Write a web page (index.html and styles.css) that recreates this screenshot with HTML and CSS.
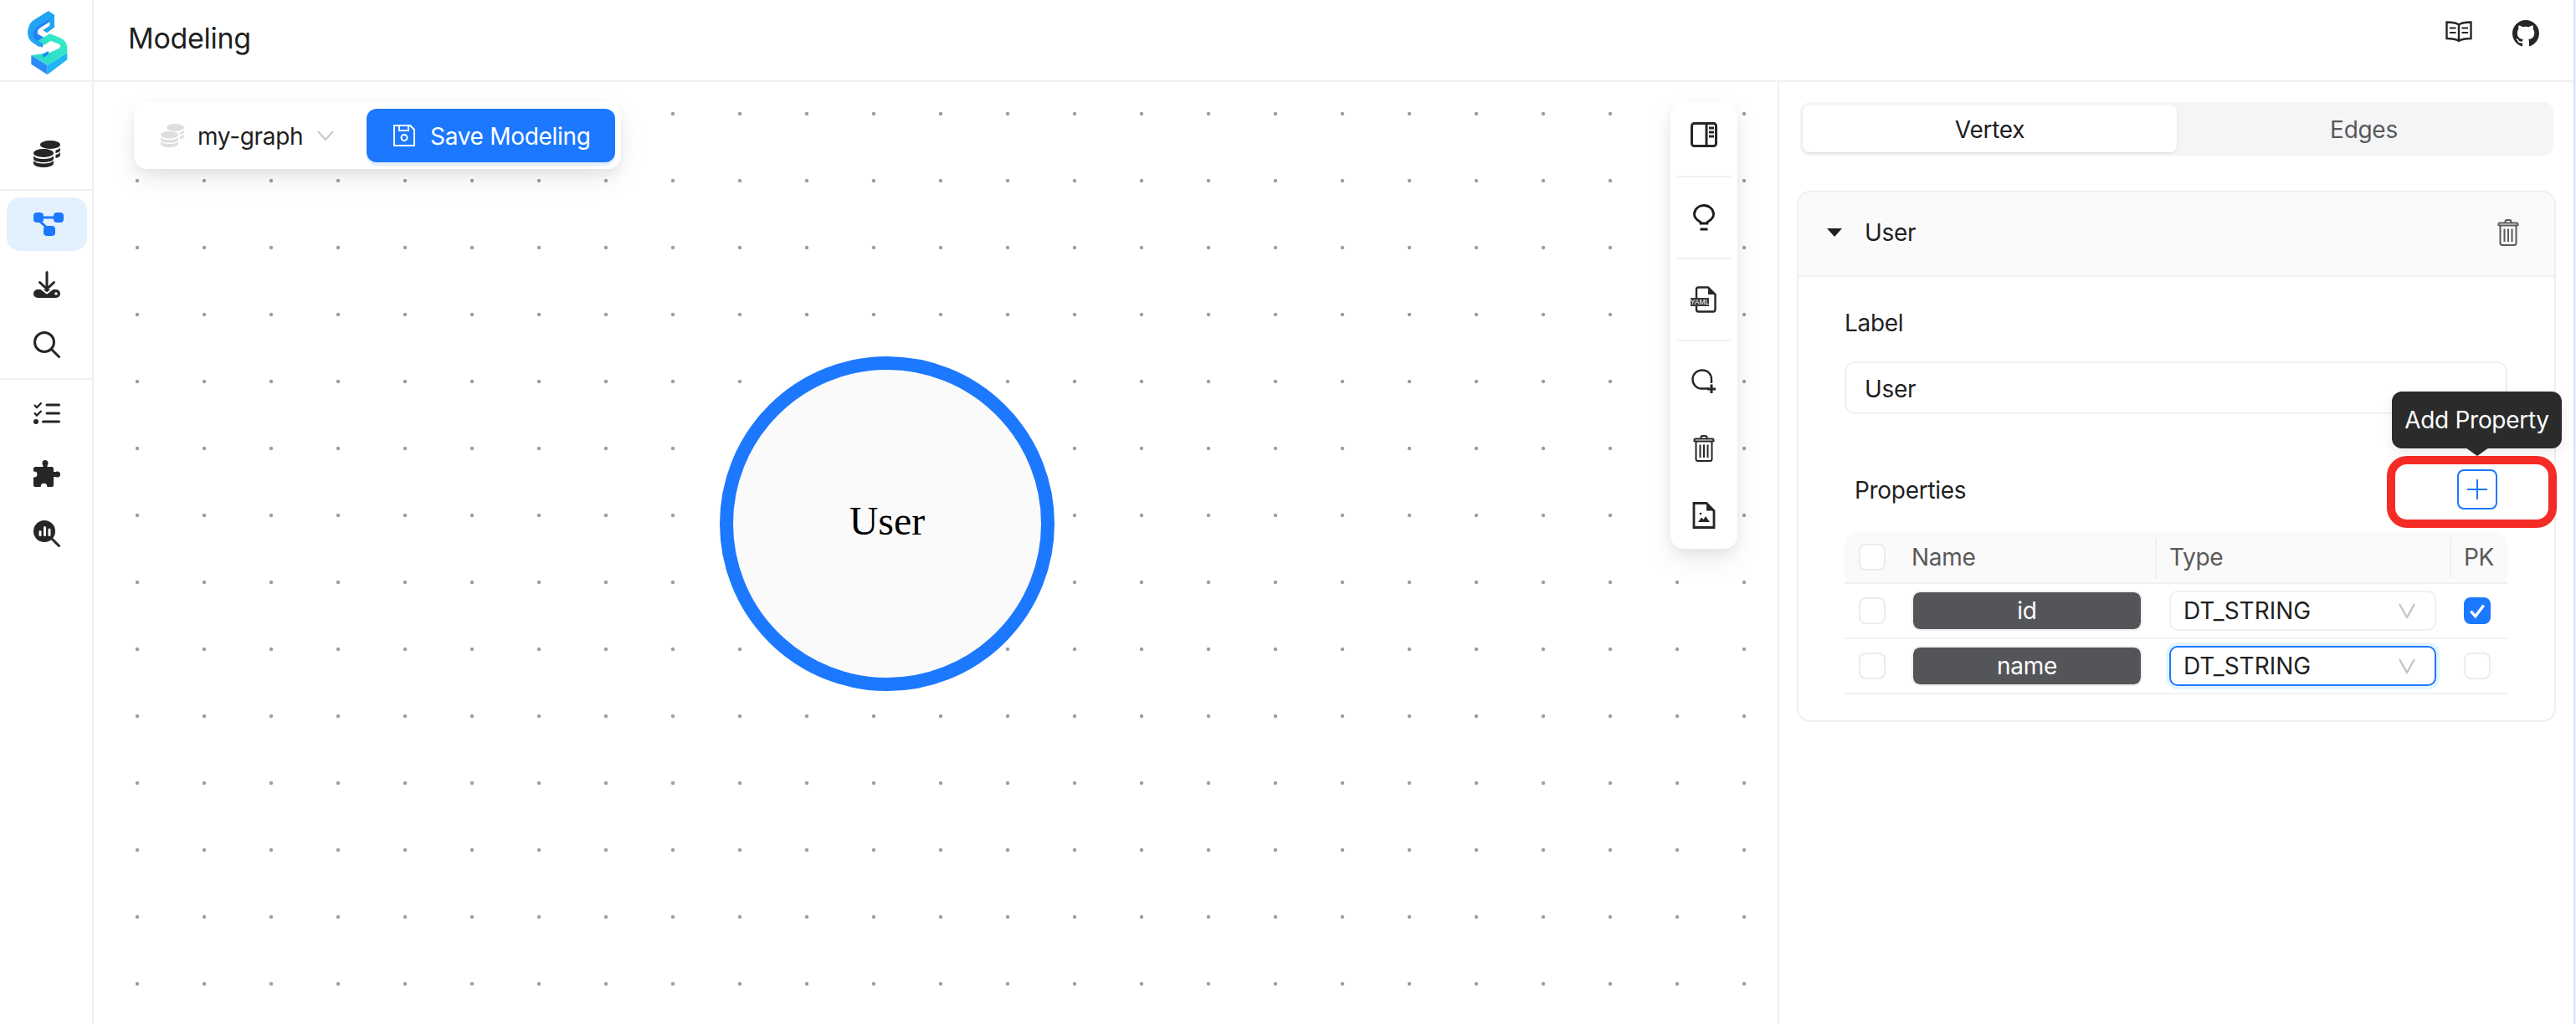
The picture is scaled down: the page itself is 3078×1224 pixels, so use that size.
FILE: index.html
```html
<!DOCTYPE html>
<html lang="en">
<head>
<meta charset="utf-8">
<title>Modeling</title>
<link rel="stylesheet" href="styles.css">
</head>
<body>
<svg class="defs" width="0" height="0" aria-hidden="true">
  <symbol id="coins" viewBox="0 0 32 32">
    <ellipse cx="20" cy="5" rx="12" ry="5"/>
    <path d="M26.500 11.500C29 11 31 10 32 8.500V11.500C32 13 29.500 14.500 26.500 15Z"/>
    <path d="M26.500 17C29 16.500 31 15.500 32 14V17C32 19 29.500 20.500 26.500 21Z"/>
    <ellipse cx="12" cy="15" rx="12" ry="5"/>
    <path d="M0 18.500C2 21 7 22 12 22S22 21 24 18.500V21.500C24 24.500 18 26 12 26S0 24.500 0 21.500Z"/>
    <path d="M0 24C2 26.500 7 27.500 12 27.500S22 26.500 24 24V27C24 30.500 18 32 12 32S0 30.500 0 27Z"/>
  </symbol>
  <symbol id="trash" viewBox="0 0 32 32">
    <g fill="none" stroke="currentColor" stroke-width="2">
      <path d="M5 7.500H27M6.500 7.500V28.500C6.500 30 7.500 31 9 31H23C24.500 31 25.500 30 25.500 28.500V7.500"/>
      <path d="M4.500 8V6C4.500 5 5 4.500 6 4.500H26C27 4.500 27.500 5 27.500 6V8" />
      <path d="M12.500 4.500V3C12.500 1.800 13.500 1 14.500 1H17.500C18.500 1 19.500 1.800 19.500 3V4.500"/>
      <path d="M11.500 11.500V27M16 11.500V27M20.500 11.500V27"/>
    </g>
  </symbol>
  <symbol id="chev" viewBox="0 0 20 12">
    <path d="M1 1L10 11L19 1" fill="none" stroke="currentColor" stroke-width="2"/>
  </symbol>
</svg>

<div class="app">
  <aside class="sidebar">
    <div class="logo">
      <svg class="logo-mark" viewBox="0 0 210 255">
        <defs>
          <linearGradient id="tealg" x1="0" y1="1" x2="1" y2="0">
            <stop offset="0" stop-color="#2cd4cf"/><stop offset="1" stop-color="#35eec4"/>
          </linearGradient>
        </defs>
        <path fill="#2484f7" d="M113 22L58 56Q38 72 40 104Q42 124 60 136L92 152L100 118L76 104Q70 92 84 82L135 50Z"/>
        <path fill="#1fa5f4" d="M114 22L135 35V80L108 100L94 90L118 74V50L78 74Q58 88 58 106Q60 122 76 130L96 142L80 150L62 138Q42 124 40 104Q40 72 60 56Z"/>
        <path fill="#2a8bf8" d="M52 180L110 216V250L52 212Z"/>
        <path fill="#1fb4f3" d="M110 216L181 171V196L110 250Z"/>
        <path fill="url(#tealg)" d="M52 180L110 216L181 171V150Q180 128 150 115L118 103L76 128L100 143L122 128L152 140Q162 148 150 156L116 172Z"/>
        <path fill="#1c8df4" d="M90 178L114 164V176L96 188Z"/>
      </svg>
    </div>
    <nav class="nav">
      <a class="nav-item nav-first"><svg class="ico" fill="currentColor"><use href="#coins"/></svg></a>
      <div class="nav-line"></div>
      <a class="nav-item is-active">
        <svg class="ico-graph" viewBox="0 0 40 32" fill="currentColor">
          <rect x="4" y="2" width="12" height="12" rx="4"/>
          <rect x="28" y="2" width="12" height="12" rx="4"/>
          <rect x="16" y="18" width="14" height="12" rx="4"/>
          <path d="M14 8H30M11 12L21 21" stroke="currentColor" stroke-width="3" fill="none"/>
        </svg>
      </a>
      <a class="nav-item">
        <svg class="ico" viewBox="0 0 32 32" fill="currentColor">
          <rect x="0" y="22" width="32" height="10" rx="5"/>
          <path d="M8 20.500L16 26.500L24 20.500" fill="none" stroke="#fff" stroke-width="2"/>
          <path d="M16 1.500V21M7.500 13.500L16 21.500L24.500 13.500" fill="none" stroke="currentColor" stroke-width="3" stroke-linecap="round"/>
          <circle cx="27" cy="27" r="1.800" fill="#fff"/>
        </svg>
      </a>
      <a class="nav-item">
        <svg class="ico" viewBox="0 0 32 32" fill="none" stroke="currentColor" stroke-width="3" stroke-linecap="round">
          <circle cx="13" cy="13" r="11.500"/><path d="M21.500 21.500L30.500 30.500"/>
        </svg>
      </a>
      <div class="nav-line"></div>
      <a class="nav-item">
        <svg class="ico" viewBox="0 0 32 32" fill="none" stroke="currentColor" stroke-width="3" stroke-linecap="round">
          <path d="M16 6H30.500M16 16H30.500M11.500 26H30.500"/>
          <path d="M1 6L4 9L9.500 3.500M1 15.500L4 18.500L9.500 13" stroke-width="2.400" stroke-linecap="butt"/>
          <circle cx="3" cy="26" r="3" fill="currentColor" stroke="none"/>
        </svg>
      </a>
      <a class="nav-item">
        <svg class="ico" viewBox="0 0 32 32" fill="currentColor">
          <path d="M2 8H11.500V5.500H16.500V8H22C23 8 24 9 24 10V14H26V20H24V30C24 31 23 32 22 32H2C1 32 0 31 0 30V10C0 9 1 8 2 8Z"/>
          <circle cx="14" cy="3.500" r="3.500"/><circle cx="28.500" cy="17" r="3.500"/>
          <circle cx="1" cy="17" r="3.400" fill="#fff"/><circle cx="12.500" cy="31.500" r="3.800" fill="#fff"/>
        </svg>
      </a>
      <a class="nav-item">
        <svg class="ico" viewBox="0 0 32 32" fill="currentColor">
          <circle cx="13" cy="13" r="13"/>
          <path d="M22 22L30.500 30.500" stroke="currentColor" stroke-width="3" stroke-linecap="round"/>
          <rect x="6.500" y="12" width="3" height="7" rx="1.500" fill="#fff"/>
          <rect x="12" y="7" width="3" height="12" rx="1.500" fill="#fff"/>
          <rect x="17.500" y="9.500" width="3" height="9.500" rx="1.500" fill="#fff"/>
        </svg>
      </a>
    </nav>
  </aside>

  <div class="main">
    <header class="topbar">
      <h1 class="title">Modeling</h1>
      <div class="top-icons">
        <svg class="ico" viewBox="0 0 32 32" fill="none" stroke="#262626" stroke-width="2.400">
          <path d="M16 5.500C13 3.500 9 2.500 1.500 2.500V22C9 22 13 23 16 25C19 23 23 22 30.500 22V2.500C23 2.500 19 3.500 16 5.500ZM16 5.500V25"/>
          <path d="M5 9.500H12.500M5 15H12.500M19.500 9.500H27M19.500 15H27" stroke-width="2.200"/>
        </svg>
        <svg class="ico" viewBox="0 0 16 16" fill="#262626"><path d="M8 0C3.580 0 0 3.580 0 8c0 3.540 2.290 6.530 5.470 7.590.4.070.55-.17.55-.38 0-.19-.01-.82-.01-1.490-2.010.37-2.530-.49-2.690-.94-.09-.23-.48-.94-.82-1.130-.28-.15-.68-.52-.01-.53.63-.01 1.080.58 1.230.82.72 1.210 1.870.87 2.330.66.070-.52.28-.87.51-1.070-1.780-.2-3.640-.89-3.640-3.950 0-.87.31-1.590.82-2.150-.08-.2-.36-1.020.08-2.120 0 0 .67-.21 2.200.82.64-.18 1.320-.27 2-.27.68 0 1.360.09 2 .27 1.530-1.040 2.200-.82 2.200-.82.44 1.100.16 1.920.08 2.120.51.56.82 1.270.82 2.150 0 3.070-1.870 3.750-3.650 3.950.29.25.54.73.54 1.480 0 1.070-.01 1.930-.01 2.200 0 .21.15.46.55.38A8.013 8.013 0 0016 8c0-4.420-3.580-8-8-8z"/></svg>
      </div>
    </header>

    <div class="workspace">
      <section class="canvas">
        <div class="graph-bar">
          <div class="graph-select">
            <svg class="ico-sm" fill="#dedede"><use href="#coins"/></svg>
            <span>my-graph</span>
            <svg class="chev-lg"><use href="#chev"/></svg>
          </div>
          <button class="save-btn">
            <svg class="save-ico" viewBox="0 0 26 26" fill="none" stroke="#fff" stroke-width="2">
              <path d="M1 1H20L25 6V25H1Z"/><path d="M7 1V7H18V1"/><circle cx="13" cy="15.500" r="3.500"/>
            </svg>
            Save Modeling
          </button>
        </div>

        <div class="node"><span>User</span></div>

        <div class="tools">
          <button class="tool tool-sep">
            <svg class="ico" viewBox="0 0 32 32" fill="none" stroke="#262626" stroke-width="3">
              <rect x="1.500" y="1.500" width="29" height="27" rx="3"/><path d="M19 1.500V28.500"/>
              <path d="M22 7H28M22 12H28M22 17H28" stroke-width="3"/>
            </svg>
          </button>
          <button class="tool tool-sep">
            <svg class="ico" viewBox="0 0 32 32" fill="none" stroke="#1a1a1a" stroke-width="2.800">
              <path d="M12 23V21.500C10 20 4.500 18 4.500 12C4.500 6 10 1.500 16 1.500S27.500 6 27.500 12C27.500 18 22 20 20 21.500V23Z"/>
              <path d="M11.500 30H20.500" stroke-width="3"/>
            </svg>
          </button>
          <button class="tool tool-sep">
            <svg class="ico" viewBox="0 0 32 32" fill="none">
              <path d="M7 14V4C7 2.500 8 1.500 9.500 1.500H21L29.500 10V28C29.500 29.500 28.500 30.500 27 30.500H9.500C8 30.500 7 29.500 7 28V24" stroke="#262626" stroke-width="2.400"/>
              <path d="M21 1.500V10H29.500Z" fill="#262626"/>
              <rect x="0" y="14" width="22" height="10" fill="#3a3a3a"/>
              <text class="yaml" x="11" y="22.300" text-anchor="middle">YAML</text>
            </svg>
          </button>
          <button class="tool tool-gap">
            <svg class="ico" viewBox="0 0 32 32" fill="none" stroke="#262626" stroke-width="2.400">
              <path d="M22 24.500H13C7 24.500 2.500 19.500 2.500 13.500S7 2.500 14 2.500S25 7.500 25 13.500V18"/>
              <path d="M25 19.500V30M20 25H30" stroke-width="3"/>
            </svg>
          </button>
          <button class="tool tool-gap"><svg class="ico trash-dark"><use href="#trash"/></svg></button>
          <button class="tool">
            <svg class="ico" viewBox="0 0 32 32" fill="none">
              <path d="M4 1.500H19L28 10.500V30.500H4Z" stroke="#262626" stroke-width="2.800"/>
              <path d="M19 1.500V10.500H28Z" fill="#262626"/>
              <circle cx="12" cy="14" r="1.300" fill="#262626"/>
              <path d="M9 24L13 18.500L15.500 21L18 17L23 24Z" fill="#262626"/>
            </svg>
          </button>
        </div>
      </section>

      <section class="panel">
        <div class="tabs">
          <div class="tab is-on">Vertex</div>
          <div class="tab">Edges</div>
        </div>

        <div class="card">
          <div class="card-head">
            <span class="caret"></span>
            <span class="card-name">User</span>
            <svg class="ico trash-grey"><use href="#trash"/></svg>
          </div>
          <div class="card-body">
            <div class="field-label">Label</div>
            <div class="text-input">User</div>

            <div class="props-row">
              <span>Properties</span>
              <div class="add-wrap">
                <div class="tip">Add Property</div>
                <div class="mark"></div>
                <button class="add-btn">
                  <svg class="plus" viewBox="0 0 24 24" stroke="#1c78ff" stroke-width="2"><path d="M12 0V24M0 12H24"/></svg>
                </button>
              </div>
            </div>

            <div class="table">
              <div class="t-row t-head">
                <div class="c c-check"><span class="box"></span></div>
                <div class="c c-name">Name</div>
                <div class="c c-type">Type</div>
                <div class="c c-pk">PK</div>
              </div>
              <div class="t-row">
                <div class="c c-check"><span class="box"></span></div>
                <div class="c c-name"><div class="name-pill">id</div></div>
                <div class="c c-type"><div class="select"><span>DT_STRING</span><svg class="chev"><use href="#chev"/></svg></div></div>
                <div class="c c-pk">
                  <span class="box is-checked">
                    <svg viewBox="0 0 20 20" fill="none" stroke="#fff" stroke-width="3"><path d="M3 10.500L8 16L17 4"/></svg>
                  </span>
                </div>
              </div>
              <div class="t-row">
                <div class="c c-check"><span class="box"></span></div>
                <div class="c c-name"><div class="name-pill">name</div></div>
                <div class="c c-type"><div class="select is-focus"><span>DT_STRING</span><svg class="chev"><use href="#chev"/></svg></div></div>
                <div class="c c-pk"><span class="box"></span></div>
              </div>
            </div>
          </div>
        </div>
      </section>
    </div>
  </div>
  <div class="edge"></div>
</div>
</body>
</html>
```
FILE: styles.css
```css
* { box-sizing: border-box; }
html, body { margin: 0; height: 100%; }
body {
  font-family: Inter, "Noto Sans", sans-serif;
  font-size: 28px;
  letter-spacing: -0.3px;
  color: #1f1f1f;
  background: #fff;
  overflow: hidden;
}
.defs { position: absolute; }
.app { display: flex; height: 1224px; }

.sidebar { width: 112px; flex: none; border-right: 2px solid #f0f0f0; }
.logo {
  height: 98px;
  border-bottom: 2px solid #f0f0f0;
  display: flex;
  align-items: center;
  justify-content: center;
}
.logo-mark { width: 70px; height: 85px; }
.nav { display: flex; flex-direction: column; padding: 54px 0 0; }
.nav-item {
  height: 64px;
  margin: 0 6px 8px 8px;
  border-radius: 16px;
  display: flex;
  align-items: center;
  justify-content: center;
  color: #262626;
}
.nav-first { margin-bottom: 10px; }
.nav-line { height: 2px; background: #f0f0f0; margin-bottom: 8px; }
.nav-item.is-active { background: #e3f1ff; color: #1c78ff; }
.ico { width: 32px; height: 32px; display: block; flex: none; }
.ico-graph { width: 40px; height: 32px; display: block; }
.ico-sm { width: 28px; height: 28px; display: block; flex: none; }

.main { flex: 1; min-width: 0; display: flex; flex-direction: column; }
.topbar {
  height: 98px;
  flex: none;
  border-bottom: 2px solid #f0f0f0;
  display: flex;
  align-items: center;
  justify-content: space-between;
  padding: 0 41px;
}
.title { margin: 0 0 4px; font-size: 34px; font-weight: 400; line-height: 44px; }
.top-icons { display: flex; gap: 48px; padding-bottom: 16px; }

.workspace { flex: 1; display: flex; min-height: 0; }
.canvas {
  position: relative;
  width: 2014px;
  flex: none;
  border-right: 2px solid #f0f0f0;
  background-image: radial-gradient(circle, #9d9da6 1.800px, rgba(157, 157, 166, 0) 2.600px);
  background-size: 80px 80px;
  background-position: 12px -2px;
}
.graph-bar {
  position: absolute;
  left: 48px;
  top: 24px;
  height: 80px;
  width: 582px;
  background: #fff;
  border-radius: 16px;
  display: flex;
  align-items: center;
  padding: 0 7px 0 32px;
  box-shadow: 0 12px 32px rgba(0, 0, 0, .08), 0 6px 12px rgba(0, 0, 0, .05);
}
.graph-select { display: flex; align-items: center; flex: 1; }
.graph-select span { margin-left: 16px; line-height: 44px; padding-top: 2px; }
.chev-lg { width: 20px; height: 12px; margin-left: 17px; color: #c8c8c8; }
.save-btn {
  width: 297px;
  height: 64px;
  border: 0;
  border-radius: 12px;
  background: #1c78ff;
  color: #fff;
  font: inherit;
  letter-spacing: -0.3px;
  display: flex;
  align-items: center;
  padding: 2px 0 0 32px;
  gap: 18px;
  box-shadow: 0 4px 0 #e3f0ff;
}
.save-ico { width: 26px; height: 26px; flex: none; margin-top: -2px; }

.node {
  position: absolute;
  left: 748px;
  top: 328px;
  width: 400px;
  height: 400px;
  border: 16px solid #1c78ff;
  border-radius: 50%;
  background: #fafafa;
  font-family: "Liberation Serif", "Times New Roman", serif;
  font-size: 48px;
  letter-spacing: 0;
  color: #000;
  display: flex;
  align-items: center;
  justify-content: center;
}
.node span { position: relative; top: -4px; }

.tools {
  position: absolute;
  left: 1884px;
  top: 24px;
  width: 80px;
  background: #fff;
  border-radius: 16px;
  padding: 24px 8px;
  display: flex;
  flex-direction: column;
  align-items: stretch;
  box-shadow: 0 12px 32px rgba(0, 0, 0, .08), 0 6px 12px rgba(0, 0, 0, .05);
}
.tool {
  border: 0;
  padding: 0;
  background: none;
  display: flex;
  justify-content: center;
}
.tool-sep { padding-bottom: 32px; margin-bottom: 32px; border-bottom: 2px solid #f0f0f0; }
.tool-gap { margin-bottom: 48px; }
.yaml { font-family: "Liberation Sans", Arial, sans-serif; font-size: 8.500px; fill: #fff; letter-spacing: 0; }
.trash-dark { color: #262626; }
.trash-grey { color: #595959; margin-left: auto; }

.panel { flex: 1; min-width: 0; padding: 24px 21px 0 21px; }
.tabs {
  margin: 0 3px 0 4px;
  height: 64px;
  background: #f4f5f7;
  border-radius: 12px;
  padding: 4px 3px;
  display: flex;
}
.tab {
  flex: 1;
  display: flex;
  align-items: center;
  justify-content: center;
  color: #595959;
  border-radius: 8px;
  padding-top: 2px;
}
.tab.is-on {
  background: #fff;
  color: #1f1f1f;
  box-shadow: 0 2px 4px rgba(0, 0, 0, .06), 0 1px 2px rgba(0, 0, 0, .04);
}
.card {
  margin-top: 42px;
  border: 2px solid #f0f0f0;
  border-radius: 16px;
}
.card-head {
  height: 101px;
  background: #fafafa;
  border-bottom: 2px solid #f0f0f0;
  border-radius: 14px 14px 0 0;
  display: flex;
  align-items: center;
  padding: 0 39px 4px 34px;
}
.caret {
  width: 0;
  height: 0;
  border-left: 9px solid transparent;
  border-right: 9px solid transparent;
  border-top: 10px solid #1f1f1f;
  margin-right: 27px;
}
.card-body { padding: 33px 56px 31px 55px; }
.field-label { line-height: 44px; }
.text-input {
  margin-top: 24px;
  height: 63px;
  border: 2px solid #f0f0f0;
  border-radius: 12px;
  padding: 2px 22px 0;
  display: flex;
  align-items: center;
}
.props-row {
  margin-top: 66px;
  height: 48px;
  display: flex;
  align-items: center;
  justify-content: space-between;
  padding: 0 12px;
}
.props-row > span { position: relative; top: 1px; }
.add-wrap { position: relative; width: 48px; height: 48px; }
.add-btn {
  display: flex;
  align-items: center;
  justify-content: center;
  position: relative;
  width: 48px;
  height: 48px;
  padding: 0;
  border: 2px solid #1c78ff;
  border-radius: 8px;
  background: #fff;
}
.plus { width: 24px; height: 24px; display: block; }
.mark {
  position: absolute;
  left: -84px;
  top: -16px;
  width: 203px;
  height: 86px;
  border: 10px solid #f52b26;
  border-radius: 24px;
}
.tip {
  position: absolute;
  left: -78px;
  top: -93px;
  width: 203px;
  height: 68px;
  background: #2b2b2b;
  color: #fff;
  border-radius: 12px;
  display: flex;
  align-items: center;
  justify-content: center;
  white-space: nowrap;
  box-shadow: 0 6px 16px rgba(0, 0, 0, .08);
}
.tip::after {
  content: "";
  position: absolute;
  left: 50%;
  bottom: -9px;
  margin-left: -14px;
  border-left: 14px solid transparent;
  border-right: 14px solid transparent;
  border-top: 10px solid #2b2b2b;
}

.table { margin-top: 27px; }
.t-row {
  display: grid;
  grid-template-columns: 64px 307px 352px 69px;
  height: 66px;
  border-bottom: 2px solid #f0f0f0;
  align-items: center;
}
.t-head {
  height: 62px;
  background: #fafafa;
  border-radius: 16px 16px 0 0;
  color: #595959;
}
.c { padding-left: 17px; display: flex; align-items: center; position: relative; }
.t-head .c-type::before, .t-head .c-pk::before {
  content: "";
  position: absolute;
  left: 0;
  top: -6px;
  bottom: -8px;
  width: 2px;
  background: #f0f0f0;
}
.c-name { padding-left: 16px; padding-right: 15px; }
.box {
  width: 32px;
  height: 32px;
  border: 2px solid #ececec;
  border-radius: 8px;
  background: #fff;
  display: block;
  flex: none;
}
.box.is-checked { background: #1c78ff; border-color: #1c78ff; }
.box svg { display: block; width: 100%; height: 100%; padding: 3px; }
.name-pill {
  width: 276px;
  height: 48px;
  border: 2px solid #f0f0f0;
  border-radius: 10px;
  background: #545558;
  background-clip: padding-box;
  color: #fff;
  display: flex;
  align-items: center;
  justify-content: center;
}
.select {
  width: 319px;
  height: 48px;
  border: 2px solid #f0f0f0;
  border-radius: 10px;
  background: #fff;
  display: flex;
  align-items: center;
  justify-content: space-between;
  padding: 0 23px 0 15px;
  letter-spacing: 0;
}
.select.is-focus { border-color: #1c78ff; box-shadow: 0 0 0 4px #e6f4ff; }
.chev { width: 20px; height: 12px; color: #c4c4c4; transform: scale(1, 1.600); }

.edge {
  width: 3px;
  flex: none;
  border-left: 2px solid #d6e0f9;
  background: #eef2fd;
}
```
